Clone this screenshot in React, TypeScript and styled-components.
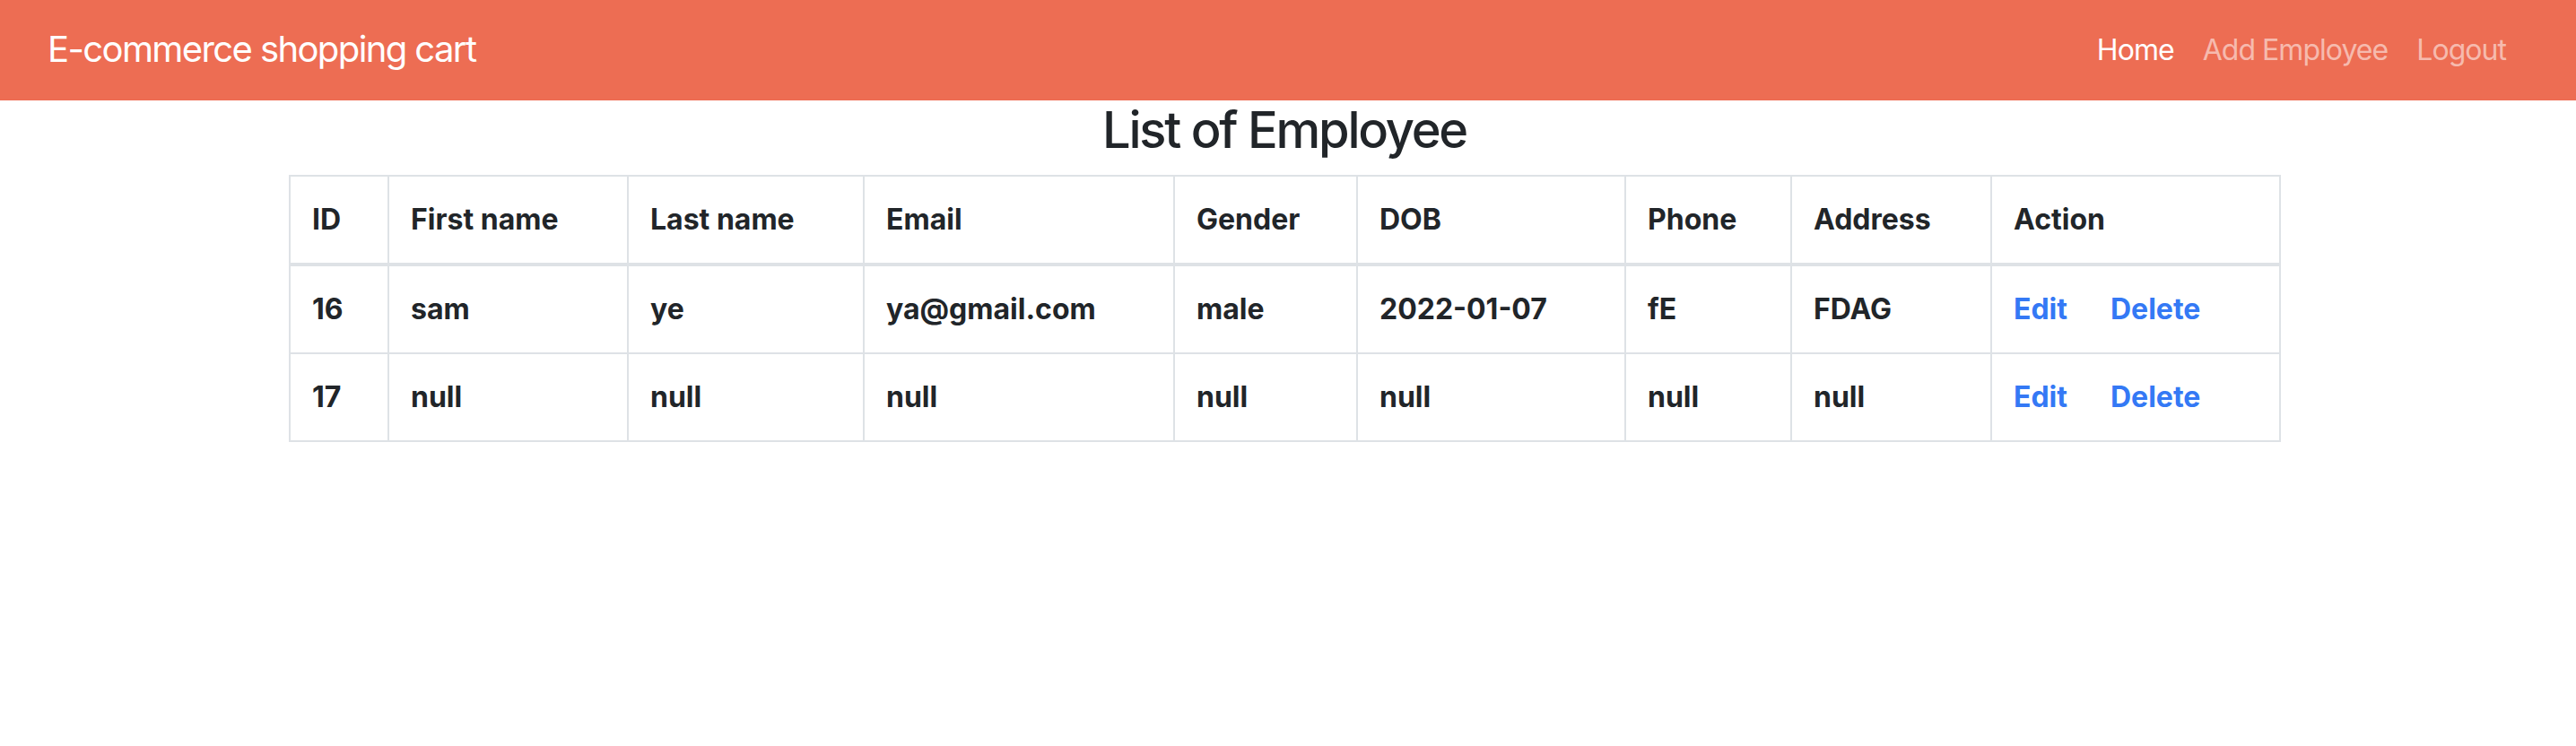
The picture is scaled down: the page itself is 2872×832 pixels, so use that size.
import React from 'react'
import styled, { createGlobalStyle } from 'styled-components'

interface Employee {
  id: number
  firstName: string
  lastName: string
  email: string
  gender: string
  dob: string
  phone: string
  address: string
}

const employees: Employee[] = [
  { id: 16, firstName: 'sam', lastName: 'ye', email: 'ya@gmail.com', gender: 'male', dob: '2022-01-07', phone: 'fE', address: 'FDAG' },
  { id: 17, firstName: 'null', lastName: 'null', email: 'null', gender: 'null', dob: 'null', phone: 'null', address: 'null' },
]

const columns = ['ID', 'First name', 'Last name', 'Email', 'Gender', 'DOB', 'Phone', 'Address', 'Action']
const colWidths = [110, 267, 263, 346, 204, 299, 185, 223, 322]

const GlobalStyle = createGlobalStyle`
  * { box-sizing: border-box; }
  body {
    margin: 0;
    background: #fff;
    color: #212529;
    font-family: Inter, "Noto Sans", sans-serif;
  }
`

function App() {
  return (
    <>
      <GlobalStyle />
      <Navbar>
        <Brand>E-commerce shopping cart</Brand>
        <NavList>
          <NavLink $active>Home</NavLink>
          <NavLink>Add Employee</NavLink>
          <NavLink>Logout</NavLink>
        </NavList>
      </Navbar>
      <Container>
        <Heading>List of Employee</Heading>
        <Table>
          <colgroup>
            {colWidths.map((w, i) => (
              <col key={i} style={{ width: w }} />
            ))}
          </colgroup>
          <thead>
            <tr>
              {columns.map((c) => (
                <HeadCell key={c}>{c}</HeadCell>
              ))}
            </tr>
          </thead>
          <tbody>
            {employees.map((e) => (
              <tr key={e.id}>
                <Cell>{e.id}</Cell>
                <Cell>{e.firstName}</Cell>
                <Cell>{e.lastName}</Cell>
                <Cell>{e.email}</Cell>
                <Cell>{e.gender}</Cell>
                <Cell>{e.dob}</Cell>
                <Cell>{e.phone}</Cell>
                <Cell>{e.address}</Cell>
                <Cell>
                  <ActionLink>Edit</ActionLink>
                  <ActionLink>Delete</ActionLink>
                </Cell>
              </tr>
            ))}
          </tbody>
        </Table>
      </Container>
    </>
  )
}

const Navbar = styled.nav`
  display: flex;
  align-items: center;
  justify-content: space-between;
  height: 112px;
  padding: 0 62px 0 53px;
  background: #ed6d53;
`

const Brand = styled.div`
  color: #fff;
  font-size: 40px;
  line-height: 1.5;
  letter-spacing: -0.04em;
  padding-bottom: 2px;
`

const NavList = styled.div`
  display: flex;
  align-items: center;
`

const NavLink = styled.a<{ $active?: boolean }>`
  padding: 0 16px;
  font-size: 32px;
  line-height: 1.5;
  letter-spacing: -0.03em;
  color: ${({ $active }) => ($active ? '#fff' : 'rgba(255, 255, 255, 0.55)')};
  cursor: pointer;
`

const Container = styled.div`
  width: 2220px;
  margin-left: calc(50% - 1114px);
`

const Heading = styled.h3`
  margin: 0 0 16px;
  text-align: center;
  font-size: 56px;
  font-weight: 500;
  line-height: 1.2;
  letter-spacing: -0.04em;
`

const Table = styled.table`
  width: 100%;
  table-layout: fixed;
  border-collapse: collapse;
  border: 2px solid #dee2e6;
`

const HeadCell = styled.th`
  padding: 24px;
  border: 2px solid #dee2e6;
  border-bottom-width: 4px;
  text-align: left;
  font-size: 32px;
  font-weight: 700;
  line-height: 1.5;
`

const Cell = styled.td`
  padding: 24px;
  border: 2px solid #dee2e6;
  font-size: 32px;
  font-weight: 700;
  line-height: 1.5;
  white-space: nowrap;
`

const ActionLink = styled.a`
  color: #3479f5;
  cursor: pointer;

  & + & {
    margin-left: 48px;
  }
`

export default App
